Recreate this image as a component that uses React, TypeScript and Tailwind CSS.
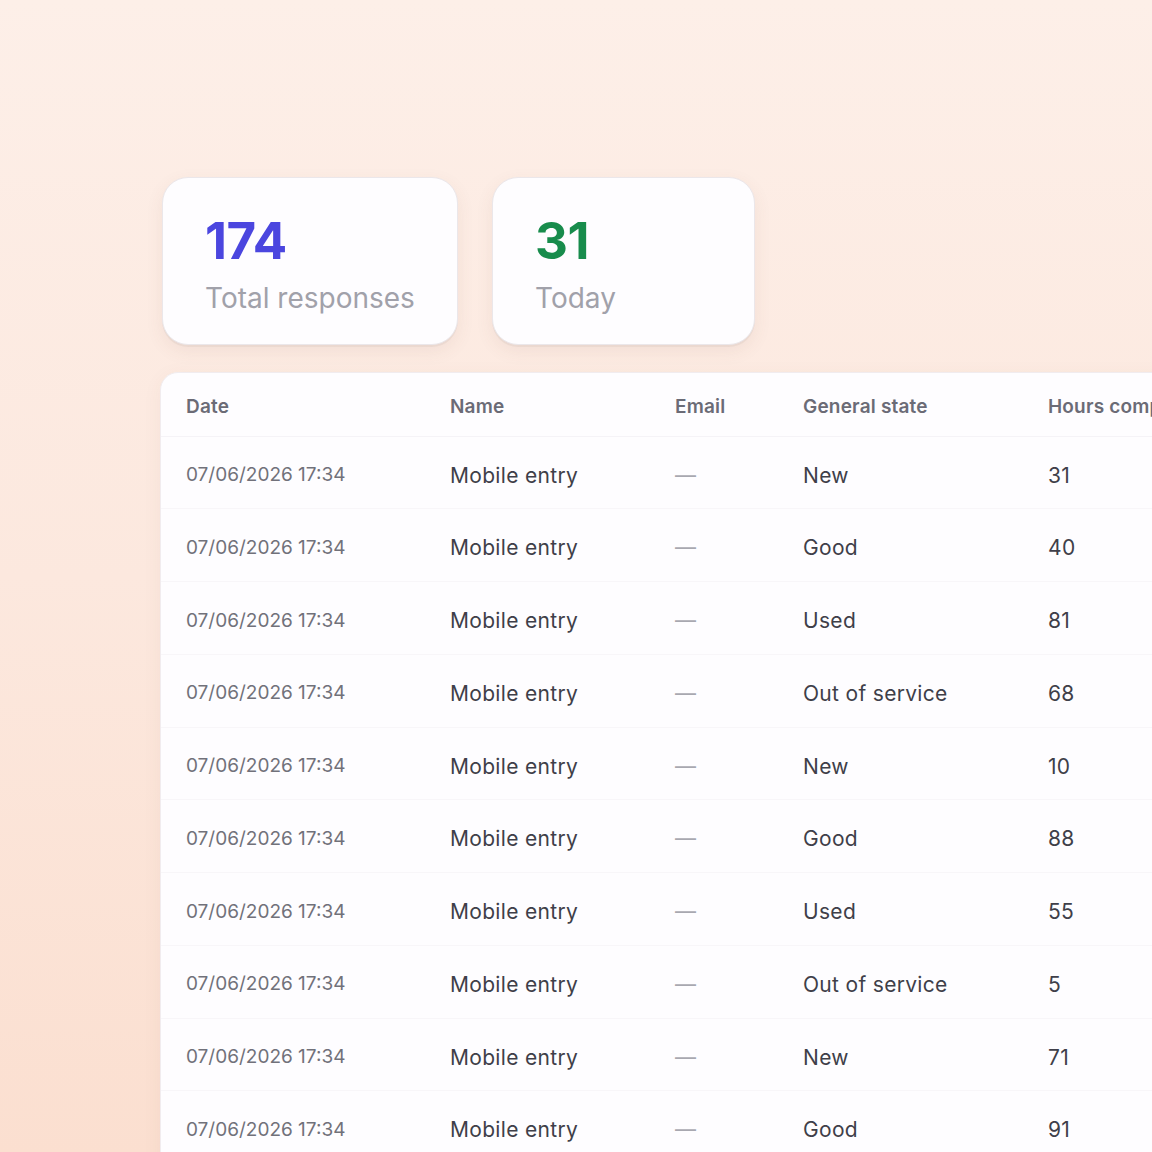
import React from 'react';

const rows = [
  { state: 'New', hours: '31' },
  { state: 'Good', hours: '40' },
  { state: 'Used', hours: '81' },
  { state: 'Out of service', hours: '68' },
  { state: 'New', hours: '10' },
  { state: 'Good', hours: '88' },
  { state: 'Used', hours: '55' },
  { state: 'Out of service', hours: '5' },
  { state: 'New', hours: '71' },
  { state: 'Good', hours: '91' },
  { state: 'Used', hours: '24' },
];

function StatCard({ value, label, color, width }: { value: string; label: string; color: string; width: string }) {
  return (
    <div className={`${width} bg-[#fefdff] rounded-[26px] border border-[#ebe7ea] shadow-[0_6px_18px_rgba(120,80,60,0.08),0_2px_0_rgba(0,0,0,0.04)] px-[42px] pt-[37px] pb-[28px]`}>
      <div className={`${color} text-[51px] font-bold leading-none tracking-[-0.01em]`}>{value}</div>
      <div className="mt-[16px] text-[28px] leading-[1.2] whitespace-nowrap text-[#a1a1aa]">{label}</div>
    </div>
  );
}

export default function App() {
  return (
    <div
      className="w-[1152px] h-[1152px] overflow-hidden bg-[linear-gradient(to_bottom,#fdefe8_0%,#fce8de_50%,#fbdfd0_100%)]"
      style={{ fontFamily: 'Inter, "Noto Sans", sans-serif' }}
    >
      <div className="pl-[162px] pt-[177px]">
        <div className="flex gap-[34px]">
          <StatCard value="174" label="Total responses" color="text-[#4b46df]" width="w-[296px]" />
          <StatCard value="31" label="Today" color="text-[#188c4c]" width="w-[263px]" />
        </div>

        <div className="mt-[27px] -ml-[2px] w-[1100px] bg-[#fefdff] rounded-tl-[18px] border border-[#f1ecef] shadow-[0_4px_20px_rgba(120,80,60,0.05)]">
          <div className="grid grid-cols-[264px_225px_128px_245px_220px] pl-[25px] h-[64px] pt-[7px] items-center border-b border-[#f5f3f7] text-[19px] font-semibold tracking-[0.01em] text-[#6b6b76]">
            <div>Date</div>
            <div>Name</div>
            <div>Email</div>
            <div>General state</div>
            <div className="whitespace-nowrap">Hours completed</div>
          </div>
          {rows.map((r, i) => (
            <div
              key={i}
              className="grid grid-cols-[264px_225px_128px_245px_220px] pl-[25px] h-[72.75px] pt-[6px] items-center border-b border-[#f8f6f9] text-[21px] tracking-[0.015em] text-[#3f3f49]"
            >
              <div className="text-[19px] tracking-normal text-[#71717a]">07/06/2026 17:34</div>
              <div>Mobile entry</div>
              <div className="text-[#a8a8b0]">—</div>
              <div>{r.state}</div>
              <div>{r.hours}</div>
            </div>
          ))}
        </div>
      </div>
    </div>
  );
}
